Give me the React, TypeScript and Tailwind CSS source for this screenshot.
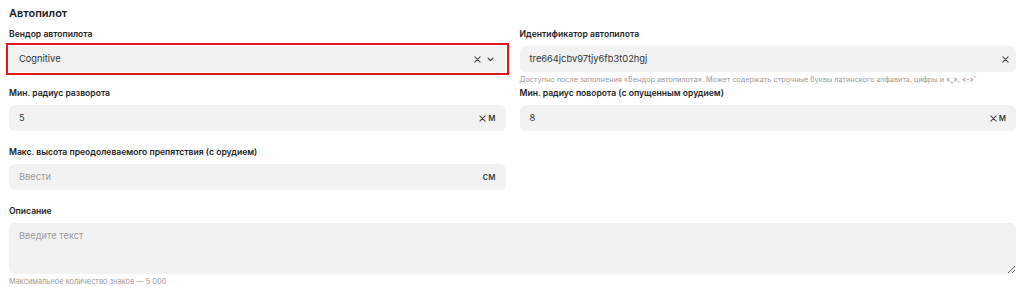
import React from 'react';

const font = { fontFamily: 'Inter, "Noto Sans", sans-serif' };

const ClearIcon = () => (
  <svg width="7" height="7" viewBox="0 0 8 8" className="text-[#444]">
    <path d="M1 1L7 7M7 1L1 7" stroke="currentColor" strokeWidth="1.2" strokeLinecap="round" />
  </svg>
);

const ChevronIcon = () => (
  <svg width="7" height="5" viewBox="0 0 8 6" className="text-[#444]">
    <path d="M1.2 1.5L4 4.3L6.8 1.5" stroke="currentColor" strokeWidth="1.5" fill="none" strokeLinecap="round" strokeLinejoin="round" />
  </svg>
);

const Label = ({ children }: { children: React.ReactNode }) => (
  <div className="h-[14px] mb-[5px] text-[8.6px] leading-[14px] font-semibold text-[#222]">{children}</div>
);

const Field = ({
  label,
  children,
  hint,
}: {
  label: string;
  children: React.ReactNode;
  hint?: string;
}) => (
  <div className="h-[59px] flex flex-col">
    <Label>{label}</Label>
    {children}
    {hint && <div className="pt-[3px] text-[7.3px] leading-[10px] text-[#9a9a9a] whitespace-nowrap">{hint}</div>}
  </div>
);

const Box = ({ children, className = '' }: { children: React.ReactNode; className?: string }) => (
  <div className={`h-[26px] bg-[#f2f2f2] flex items-center pl-[10px] text-[9.3px] ${className}`}>
    {children}
  </div>
);

export default function App() {
  return (
    <div className="w-[1024px] h-[292px] bg-white pl-[9px] pr-[8px] pt-[6px] overflow-hidden" style={font}>
      <div className="h-[14px] mb-[7px] text-[11px] leading-[14px] font-semibold text-[#222]">Автопилот</div>

      <div className="grid grid-cols-2 gap-x-[14px]">
        <Field label="Вендор автопилота">
          <Box className="outline-2 outline-[#e8141c] outline-offset-[1px] pr-[12px]">
            <span className="flex-1 text-[#333]">Cognitive</span>
            <span className="flex items-center gap-[6px]">
              <ClearIcon />
              <ChevronIcon />
            </span>
          </Box>
        </Field>

        <Field
          label="Идентификатор автопилота"
          hint="Доступно после заполнения «Вендор автопилота». Может содержать строчные буквы латинского алфавита, цифры и «_», «-»'"
        >
          <Box className="rounded-[6px] pr-[7px]">
            <span className="flex-1 text-[#333]">tre664jcbv97tjy6fb3t02hgj</span>
            <ClearIcon />
          </Box>
        </Field>

        <Field label="Мин. радиус разворота">
          <Box className="rounded-[6px] pr-[10px]">
            <span className="flex-1 text-[#333]">5</span>
            <span className="flex items-center gap-[2px]">
              <ClearIcon />
              <span className="font-medium text-[#333]">м</span>
            </span>
          </Box>
        </Field>

        <Field label="Мин. радиус поворота (с опущенным орудием)">
          <Box className="rounded-[6px] pr-[10px]">
            <span className="flex-1 text-[#333]">8</span>
            <span className="flex items-center gap-[2px]">
              <ClearIcon />
              <span className="font-medium text-[#333]">м</span>
            </span>
          </Box>
        </Field>

        <Field label="Макс. высота преодолеваемого препятствия (с орудием)">
          <Box className="rounded-[6px] pr-[10px]">
            <span className="flex-1 text-[#9a9a9a]">Ввести</span>
            <span className="font-medium text-[#333]">см</span>
          </Box>
        </Field>
        <div />
      </div>

      <div className="flex flex-col">
        <Label>Описание</Label>
        <textarea
          placeholder="Введите текст"
          className="h-[51px] w-full rounded-[6px] bg-[#f2f2f2] px-[10px] py-[6px] text-[9.3px] text-[#333] placeholder:text-[#9a9a9a] outline-none resize-y"
          style={font}
        />
        <div className="mt-[3px] text-[7.4px] leading-[10px] text-[#9a9a9a]">Максимальное количество знаков — 5 000</div>
      </div>
    </div>
  );
}
